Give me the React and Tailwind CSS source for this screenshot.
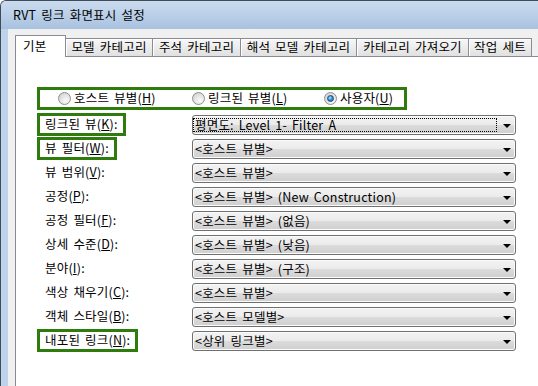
import React from 'react';

const GREEN = 'border-[#2e7b0e]';

function Radio({ checked }) {
  return (
    <span className="relative inline-block h-[13px] w-[13px] shrink-0 rounded-full border border-[#8e8f8f] bg-[radial-gradient(circle_at_65%_70%,#fbfbfb_0%,#e2e2e2_55%,#c4c4c4_100%)]">
      {checked && (
        <span className="absolute left-[2px] top-[2px] h-[7px] w-[7px] rounded-full border border-[#19497a] bg-[radial-gradient(circle_at_40%_35%,#b8e4ff_0%,#3b95e0_45%,#0d4f98_100%)]" />
      )}
    </span>
  );
}

function Combo({ children, focus }) {
  return (
    <div className="relative mt-[2px] flex h-[20px] w-[324px] items-center rounded-[3px] border border-[#707070] bg-[linear-gradient(to_bottom,#f3f3f3_0%,#ebebeb_50%,#dcdcdc_50%,#cfcfcf_100%)] pl-[2px] shadow-[inset_0_0_0_1px_#fbfbfb]">
      {focus && (
        <span className="absolute bottom-[2px] left-0 right-[18px] top-[2px] border border-dotted border-black" />
      )}
      <span className="whitespace-pre leading-none">{children}</span>
      <svg className="absolute right-[4px] top-[8px]" width="8" height="4" viewBox="0 0 8 4">
        <path d="M0 0H8L4 4Z" fill="#000" />
      </svg>
    </div>
  );
}

function Mn({ c }) {
  return <u className="underline-offset-[1px]">{c}</u>;
}

const rows = [
  { label: <>링크된 뷰(<Mn c="K" />):</>, value: '평면도: Level 1- Filter A', boxed: true, focus: true },
  { label: <>뷰 필터(<Mn c="W" />):</>, value: '<호스트 뷰별>', boxed: true },
  { label: <>뷰 범위(<Mn c="V" />):</>, value: '<호스트 뷰별>' },
  { label: <>공정(<Mn c="P" />):</>, value: '<호스트 뷰별> (New Construction)' },
  { label: <>공정 필터(<Mn c="F" />):</>, value: '<호스트 뷰별> (없음)' },
  { label: <>상세 수준(<Mn c="D" />):</>, value: '<호스트 뷰별> (낮음)' },
  { label: <>분야(<Mn c="I" />):</>, value: '<호스트 뷰별> (구조)' },
  { label: <>색상 채우기(<Mn c="C" />):</>, value: '<호스트 뷰별>' },
  { label: <>객체 스타일(<Mn c="B" />):</>, value: '<호스트 모델별>' },
  { label: <>내포된 링크(<Mn c="N" />):</>, value: '<상위 링크별>', boxed: true },
];

const tabs = [
  { name: '모델 카테고리', w: 'w-[87px]' },
  { name: '주석 카테고리', w: 'w-[88px]' },
  { name: '해석 모델 카테고리', w: 'w-[116px]' },
  { name: '카테고리 가져오기', w: 'w-[112px]' },
  { name: '작업 세트', w: 'w-[63px]' },
];

export default function App() {
  return (
    <div className="h-[386px] w-[538px] overflow-hidden rounded-tl-[6px] border-l border-t border-[#3f4b5a] bg-[#bcd3ea] font-['Noto_Sans_CJK_KR','Liberation_Sans',sans-serif] text-[12.5px] tracking-[0.2px] text-black [word-spacing:2px]">
      {/* title bar */}
      <div className="flex h-[28px] items-center bg-[linear-gradient(to_bottom,#cadbee_0%,#bcd1e9_45%,#a7c1df_100%)] pl-[12px]">
        <span className="leading-none">RVT 링크 화면표시 설정</span>
      </div>

      {/* client area */}
      <div className="ml-[7px] flex h-[357px] flex-col bg-[#f0f0f0] pl-[7px] pt-[6px]">
        {/* tabs */}
        <div className="flex h-[22px] items-end">
          <div className="flex h-[22px] w-[51px] items-start border border-b-0 border-[#898c95] bg-white pl-[7px] pt-[3px]">
            <span className="leading-[14px]">기본</span>
          </div>
          {tabs.map((t) => (
            <div
              key={t.name}
              className={`flex h-[19px] ${t.w} items-center justify-center whitespace-nowrap border border-l-0 border-[#898c95] bg-[linear-gradient(to_bottom,#f7f7f7_0%,#ececec_50%,#e0e0e0_100%)] shadow-[inset_1px_1px_0_#ffffff]`}
            >
              <span className="leading-none">{t.name}</span>
            </div>
          ))}
          <div className="h-[19px] flex-1 border-b border-[#898c95]" />
        </div>

        {/* panel */}
        <div className="flex-1 border-l border-[#898c95] bg-white pl-[21px] pt-[30px]">
          <div className={`flex h-[23px] w-[370px] items-center border-[3px] ${GREEN} pl-[18px]`}>
            <div className="flex w-[134px] items-center gap-[3px]">
              <Radio />
              <span className="leading-none">호스트 뷰별(<Mn c="H" />)</span>
            </div>
            <div className="flex w-[132px] items-center gap-[3px]">
              <Radio />
              <span className="leading-none">링크된 뷰별(<Mn c="L" />)</span>
            </div>
            <div className="flex items-center gap-[3px]">
              <Radio checked />
              <span className="leading-none">사용자(<Mn c="U" />)</span>
            </div>
          </div>

          <div className="mt-[3px] flex flex-col">
            {rows.map((r, i) => (
              <div key={i} className="flex h-[24px] items-start">
                <div className="w-[155px]">
                  <span
                    className={`inline-flex h-[23px] items-center whitespace-nowrap border-[3px] px-[5px] leading-none ${
                      r.boxed ? GREEN : 'border-transparent'
                    }`}
                  >
                    {r.label}
                  </span>
                </div>
                <Combo focus={r.focus}>{r.value}</Combo>
              </div>
            ))}
          </div>
        </div>
      </div>
    </div>
  );
}
